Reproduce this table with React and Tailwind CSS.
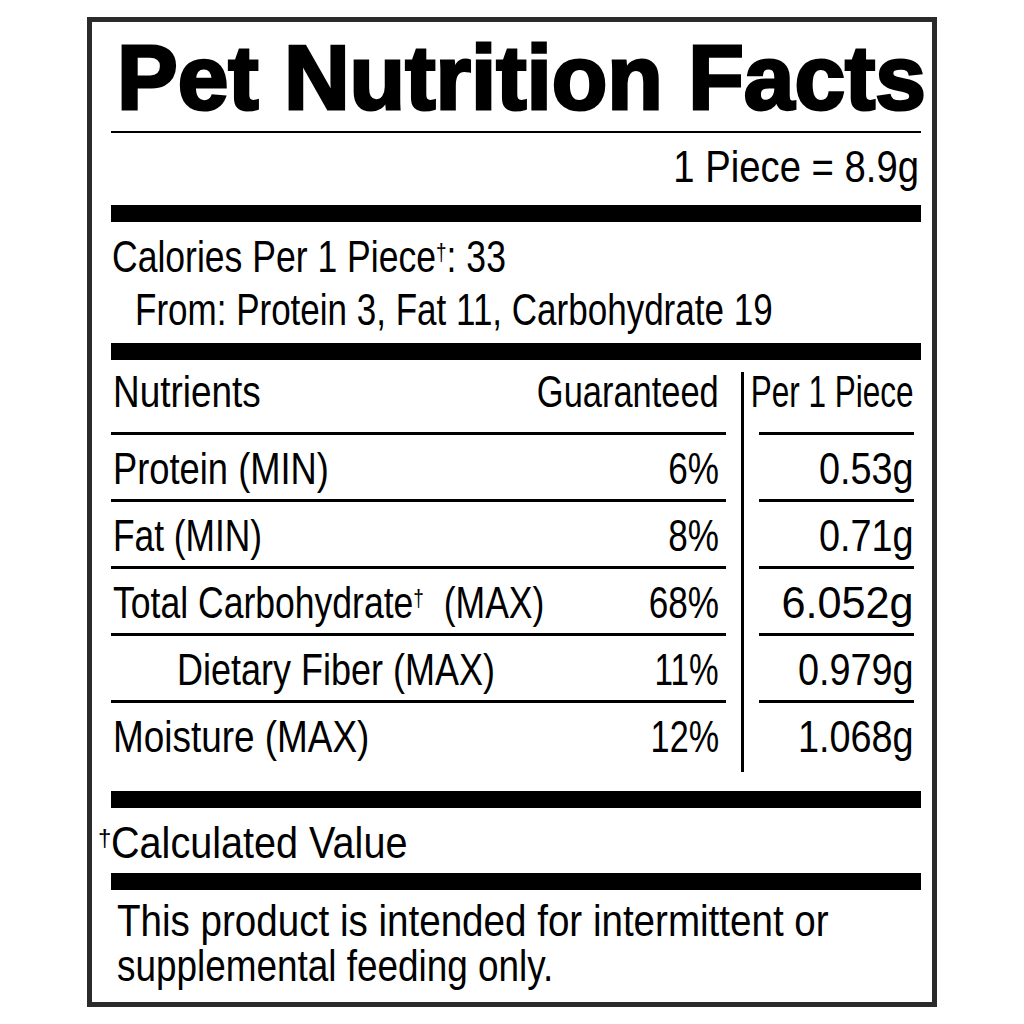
const rows = [
  { label: "Protein (MIN)", ls: "scale-x-[0.807]", pct: "6%", ps: "scale-x-[0.78]", per: "0.53g", gs: "scale-x-[0.84]" },
  { label: "Fat (MIN)", ls: "scale-x-[0.785]", pct: "8%", ps: "scale-x-[0.78]", per: "0.71g", gs: "scale-x-[0.84]" },
  { label: "Total Carbohydrate", dagger: true, suffix: "(MAX)", ls: "scale-x-[0.79]", pct: "68%", ps: "scale-x-[0.78]", per: "6.052g", gs: "scale-x-[0.96]" },
  { label: "Dietary Fiber (MAX)", indent: true, ls: "scale-x-[0.8]", pct: "11%", ps: "scale-x-[0.74]", per: "0.979g", gs: "scale-x-[0.84]" },
  { label: "Moisture (MAX)", ls: "scale-x-[0.82]", pct: "12%", ps: "scale-x-[0.76]", per: "1.068g", gs: "scale-x-[0.84]" },
];

const body = "font-['Liberation_Sans',Arial,sans-serif] text-[45px] leading-[45px] text-black";

// condensed text: Liberation Sans squeezed sideways
function C({ s, right, children }) {
  return (
    <span className={`inline-block whitespace-pre ${right ? "origin-right" : "origin-left"} ${s}`}>
      {children}
    </span>
  );
}

function Dagger({ className = "" }) {
  return <sup className={`text-[24px] ${className}`}>†</sup>;
}

function Bar({ className = "" }) {
  return <div className={`h-[17px] bg-black ${className}`} />;
}

export default function App() {
  return (
    <div className="min-h-[1024px] bg-white pt-[17px]">
      <div className="ml-[87px] w-[850px] h-[990px] border-[5px] border-[#2b2b2b] pl-[19px] pr-[11px] pt-[11px]">
        <h1 className="font-['Liberation_Sans',Arial,sans-serif] font-bold text-[91px] leading-[90px] text-black whitespace-nowrap pl-[6px] [-webkit-text-stroke:3px_black]">
          Pet Nutrition Facts
        </h1>
        <div className="mt-[8px] h-[2px] bg-black" />

        <div className={`${body} mt-[11px] flex justify-end pr-[2px]`}>
          <C s="scale-x-[0.85]" right>1 Piece = 8.9g</C>
        </div>
        <Bar className="mt-[16px]" />

        <div className={`${body} mt-[12px] pl-[1px]`}>
          <C s="scale-x-[0.79]">
            Calories Per 1 Piece<Dagger />: 33
          </C>
        </div>
        <div className={`${body} mt-[8px] pl-[24px]`}>
          <C s="scale-x-[0.778]">From: Protein 3, Fat 11, Carbohydrate 19</C>
        </div>
        <Bar className="mt-[11px]" />

        {/* table */}
        <div className="flex">
          <div className="w-[615px]">
            <div className={`${body} h-[75px] pt-[9px] pl-[2px] pr-[7px] flex border-b-[3px] border-black`}>
              <div className="flex-1 min-w-0">
                <C s="scale-x-[0.82]">Nutrients</C>
              </div>
              <div className="shrink-0">
                <C s="scale-x-[0.765]" right>Guaranteed</C>
              </div>
            </div>
            {rows.map((r, i) => (
              <div
                key={r.label}
                className={`${body} pt-[11px] pr-[7px] flex ${
                  i < rows.length - 1 ? "h-[67px] border-b-[3px] border-black" : "h-[72px]"
                } ${r.indent ? "pl-[66px]" : "pl-[2px]"}`}
              >
                <div className="flex-1 min-w-0">
                  <C s={r.ls}>
                    {r.label}
                    {r.dagger && <Dagger />}
                    {r.suffix && `  ${r.suffix}`}
                  </C>
                </div>
                <div className="shrink-0">
                  <C s={r.ps} right>{r.pct}</C>
                </div>
              </div>
            ))}
          </div>

          <div className="ml-[15px] mt-[12px] w-[3px] h-[400px] bg-black" />

          <div className="ml-[15px] w-[155px]">
            <div className={`${body} h-[75px] pt-[9px] flex justify-end border-b-[3px] border-black`}>
              <C s="scale-x-[0.7]" right>Per 1 Piece</C>
            </div>
            {rows.map((r, i) => (
              <div
                key={r.label}
                className={`${body} pt-[11px] flex justify-end ${
                  i < rows.length - 1 ? "h-[67px] border-b-[3px] border-black" : "h-[72px]"
                }`}
              >
                <C s={r.gs} right>{r.per}</C>
              </div>
            ))}
          </div>
        </div>

        <Bar className="mt-[16px]" />
        <div className={`${body} mt-[12px] pl-[2px]`}>
          <Dagger className="-ml-[15px]" />
          <C s="scale-x-[0.88]">Calculated Value</C>
        </div>
        <Bar className="mt-[8px]" />

        <p className={`${body} leading-[43px] mt-[8px] pl-[6px]`}>
          <C s="scale-x-[0.857]">This product is intended for intermittent or</C>
          <br />
          <C s="scale-x-[0.82]">supplemental feeding only.</C>
        </p>
      </div>
    </div>
  );
}
